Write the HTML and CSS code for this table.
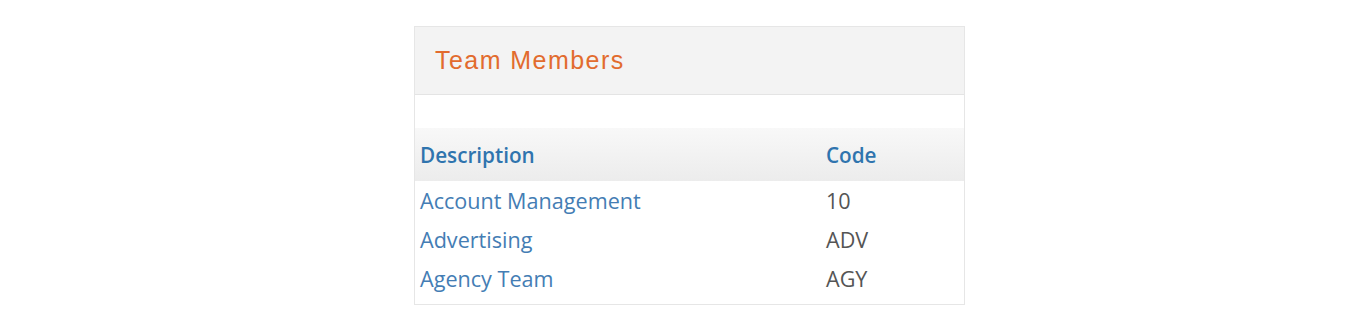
FILE: index.html
```html
<!DOCTYPE html>
<html>
<head>
<meta charset="utf-8">
<link rel="stylesheet" href="styles.css">
</head>
<body>
<div class="page">
  <section class="panel">
    <header class="panel-head"><h2 class="panel-title">Team Members</h2></header>
    <div class="panel-spacer"></div>
    <table class="grid">
      <thead>
        <tr><th class="col-desc">Description</th><th class="col-code">Code</th></tr>
      </thead>
      <tbody>
        <tr><td class="desc">Account Management</td><td class="code">10</td></tr>
        <tr><td class="desc">Advertising</td><td class="code">ADV</td></tr>
        <tr><td class="desc">Agency Team</td><td class="code">AGY</td></tr>
      </tbody>
    </table>
  </section>
</div>
</body>
</html>
```
FILE: styles.css
```css
html, body { margin: 0; padding: 0; background: #fff; }
.page { display: flex; justify-content: center; padding-top: 26px; padding-left: 7px; }
.panel {
  width: 549px;
  border: 1px solid #e6e6e6;
  background: #fff;
  font-family: "Open Sans", sans-serif;
  padding-bottom: 6px;
}
.panel-head {
  height: 67px;
  background: #f3f3f3;
  border-bottom: 1px solid #e4e4e4;
  display: flex;
  align-items: center;
  padding-left: 20px;
}
.panel-title {
  margin: 0;
  font-family: "Liberation Sans", Arial, sans-serif;
  font-weight: normal;
  font-size: 25px;
  letter-spacing: 1.45px;
  color: #e26b2e;
}
.panel-spacer { height: 33px; }
.grid { width: 100%; border-collapse: collapse; }
.grid th {
  height: 53px;
  text-align: left;
  font-weight: 600;
  font-size: 20.7px;
  color: #2f74ae;
  background: linear-gradient(#f8f8f8, #ececec);
  padding: 0 0 0 5px;
}
.grid td {
  height: 39px;
  font-size: 21.6px;
  padding: 0 0 0 5px;
}
.col-desc { width: 401px; }
.desc { color: #447db4; }
.code { color: #555; }
```
